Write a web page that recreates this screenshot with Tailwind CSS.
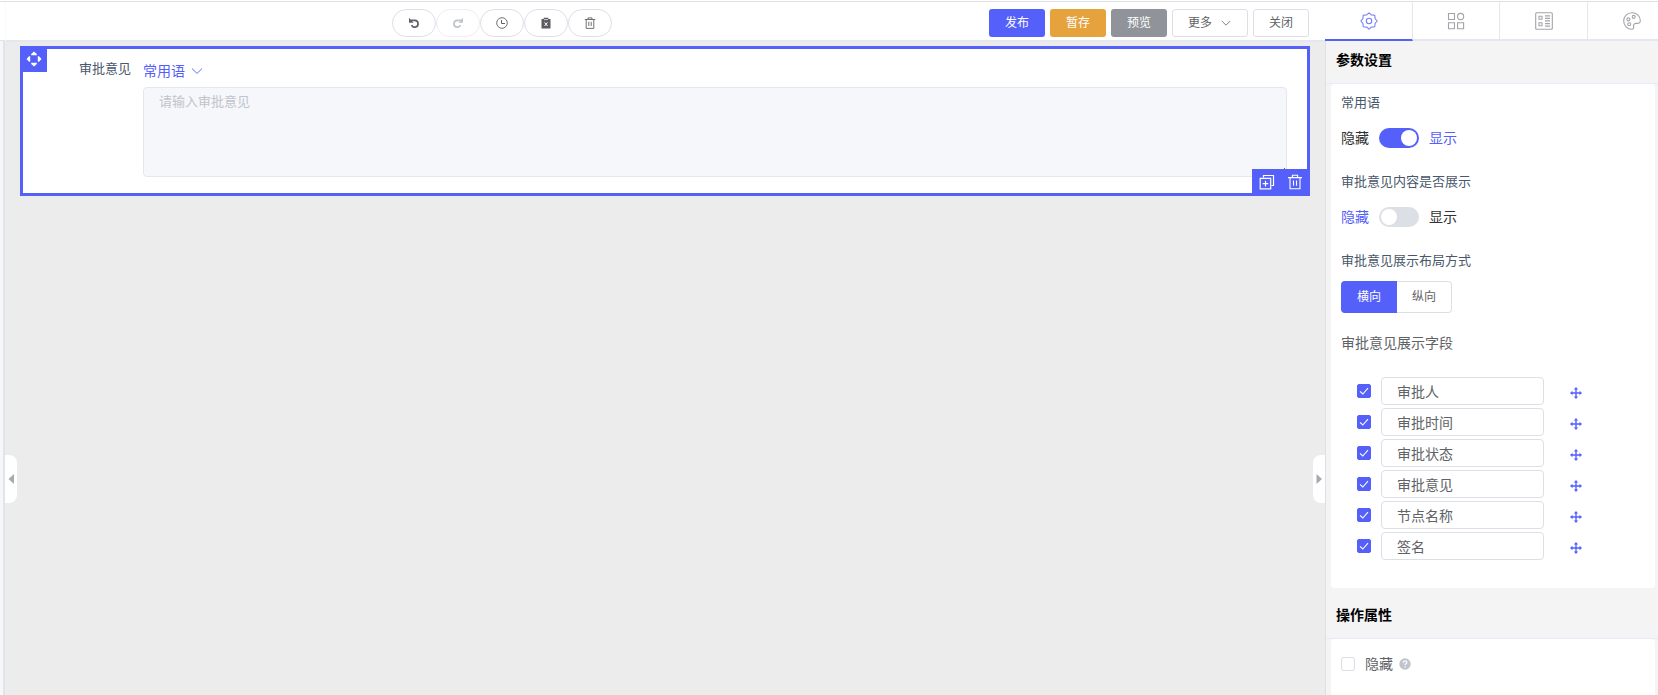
<!DOCTYPE html>
<html lang="zh-CN">
<head>
    <meta charset="UTF-8">
    <meta name="viewport" content="width=device-width, initial-scale=1.0">
    <title>表单设计</title>
    <script src="https://cdn.jsdelivr.net/npm/@tailwindcss/browser@4"></script>
    <style>
        body {
            font-family: "Liberation Sans", "Noto Sans CJK SC", sans-serif;
        }
    </style>
</head>
<body class="h-screen overflow-hidden bg-white text-sm text-[#606266] flex flex-col">
    <div class="mt-px h-px shrink-0 bg-[#dfe0e4]"></div>

    <div class="flex flex-1 min-h-0">
        <!-- collapsed component library -->
        <aside class="w-[5px] shrink-0 flex flex-col">
            <div class="h-[38px] shrink-0"></div>
            <div class="flex-1 border-t border-r-2 border-[#e0e4ee] bg-[#f7f7f8]"></div>
        </aside>

        <main class="relative flex-1 min-w-0 flex flex-col bg-[#ececec]">
            <header class="h-10 shrink-0 flex items-center bg-white border-l border-l-[#fafafa] border-b-2 border-b-[#e4e7ed] pt-1 pl-2 pr-4 text-xs">
                <div class="flex flex-1 justify-center">
                    <button aria-label="撤销" class="w-11 h-7 grid place-items-center rounded-full border border-[#dcdfe6] hover:bg-gray-50">
                        <svg class="w-3 h-3" viewBox="0 0 12 12" fill="none" stroke="#5f6168" stroke-width="1.7"><path d="M2.6 3.4H7a3.4 3.4 0 1 1-3.4 4.8"/><path d="M1 .8v5h4.6z" fill="#5f6168" stroke="none"/></svg>
                    </button>
                    <button aria-label="重做" disabled class="w-11 h-7 grid place-items-center rounded-full border border-[#ebeef5]">
                        <svg class="w-3 h-3" viewBox="0 0 12 12" fill="none" stroke="#c0c4cc" stroke-width="1.7"><path d="M9.4 3.4H5a3.4 3.4 0 1 0 3.4 4.8"/><path d="M11 .8v5H6.4z" fill="#c0c4cc" stroke="none"/></svg>
                    </button>
                    <button aria-label="历史" class="w-11 h-7 grid place-items-center rounded-full border border-[#dcdfe6] hover:bg-gray-50">
                        <svg class="w-3 h-3" viewBox="0 0 12 12" fill="none" stroke="#606266"><circle cx="6" cy="6" r="5.3" stroke-width=".9"/><path d="M5.5 3v3.5H9"/></svg>
                    </button>
                    <button aria-label="清空" class="w-11 h-7 grid place-items-center rounded-full border border-[#dcdfe6] hover:bg-gray-50">
                        <svg class="w-3 h-3" viewBox="0 0 12 12" fill="#5a5c62"><path d="M1.5 2h2.2V.8h4.6V2h2.2v9.6h-9z"/><path d="M4 2.6h4" stroke="#fff" stroke-width=".7"/><path d="M4.5 5.4l3 3.6M7.5 5.4l-3 3.6" stroke="#fff"/></svg>
                    </button>
                    <button aria-label="删除" class="w-11 h-7 grid place-items-center rounded-full border border-[#dcdfe6] hover:bg-gray-50">
                        <svg class="w-3 h-3" viewBox="0 0 12 12" fill="none" stroke="#606266" stroke-width=".9"><path d="M.8 2.5h10.4M4 2.3V.9h4v1.4M2.2 2.5v8.9h7.6V2.5M4.8 4.8v4.2M7.2 4.8v4.2"/></svg>
                    </button>
                </div>
                <div class="flex gap-[5px]">
                    <button class="w-14 h-7 rounded-[3px] bg-[#5460f9] text-white">发布</button>
                    <button class="w-14 h-7 rounded-[3px] bg-[#e6a23c] text-white">暂存</button>
                    <button class="w-14 h-7 rounded-[3px] bg-[#909399] text-white">预览</button>
                    <button class="w-[76px] h-7 rounded-[3px] border border-[#dcdfe6] flex items-center justify-center gap-2">
                        更多
                        <svg class="w-3 h-3" viewBox="0 0 12 12" fill="none" stroke="#606266" stroke-width=".8"><path d="M1.8 4 6 8.2 10.2 4"/></svg>
                    </button>
                    <button class="w-14 h-7 rounded-[3px] border border-[#dcdfe6]">关闭</button>
                </div>
            </header>

            <section class="relative mt-1 mx-[15px] border-3 border-[#5460f9] bg-white pl-14 pr-5 pb-4 flex">
                <label for="opinion" class="h-10 mr-3 flex items-center text-[13px] text-[#48576a]">审批意见</label>
                <div class="flex-1 pt-2">
                    <button class="h-7 flex items-center gap-[5px] text-[#5460f9]">
                        常用语
                        <svg class="w-3.5 h-3.5" viewBox="0 0 14 14" fill="none" stroke="#5460f9" stroke-width=".9"><path d="M2 4.6 7 9.4l5-4.8"/></svg>
                    </button>
                    <textarea id="opinion" placeholder="请输入审批意见" class="block mt-0.5 w-full h-[90px] resize-y rounded border border-[#e4e7ed] bg-[#f5f7fa] px-[15px] py-1 text-[13px] leading-5 placeholder:text-[#c0c4cc]"></textarea>
                </div>

                <button aria-label="移动" class="absolute -top-[3px] -left-[3px] w-[27px] h-[26px] grid place-items-center bg-[#5460f9]">
                    <svg class="w-4 h-4" viewBox="0 0 16 16" fill="#fff"><path d="M8 .5 10.8 3v1.2H5.200V3zM8 15.500 10.800 13v-1.200H5.200V13zM.5 8 3 5.200h1.200v5.600H3zM15.500 8 13 5.200h-1.200v5.600H13z"/></svg>
                </button>
                <div class="absolute -bottom-[3px] -right-[3px] w-[58px] h-[27px] pb-0.5 flex items-center justify-center gap-3 bg-[#5460f9]">
                    <button aria-label="复制">
                        <svg class="block w-4 h-4" viewBox="0 0 16 16" fill="none" stroke="#fff" stroke-width="1.2"><path d="M4.500 3.500v-2h10v10h-2"/><path d="M1.200 4.300h10.500v10.500H1.200zM6.500 6.800v5.600M3.700 9.600h5.600"/></svg>
                    </button>
                    <button aria-label="删除组件">
                        <svg class="block w-4 h-4" viewBox="0 0 16 16" fill="none" stroke="#fff" stroke-width="1.1"><path d="M1 3.600h14M5.400 3.400V1.200h5.200v2.200M3 3.600v11.200h10V3.600M6.500 6.500v5.200M9.500 6.500v5.200"/></svg>
                    </button>
                </div>
            </section>

            <button aria-label="展开左侧" class="absolute left-0 top-[453px] w-3 h-12 grid place-items-center rounded-r-lg bg-white">
                <svg class="w-2 h-3" viewBox="0 0 8 12" fill="#a6a9b0"><path d="M7 1v10L1.500 6z"/></svg>
            </button>
            <button aria-label="收起右侧" class="absolute right-0 top-[453px] w-3 h-12 grid place-items-center rounded-l-lg bg-white">
                <svg class="w-2 h-3" viewBox="0 0 8 12" fill="#a6a9b0"><path d="M1.500 1v10L7 6z"/></svg>
            </button>
        </main>

        <aside class="w-[333px] shrink-0 flex flex-col overflow-hidden bg-[#f4f4f4]">
            <nav class="h-[39px] shrink-0 flex bg-white">
                <button aria-label="组件设置" class="w-[88px] shrink-0 grid place-items-center border-r border-r-[#e4e7ed] border-b-2 border-b-[#5460f9]">
                    <svg class="w-[18px] h-[18px]" viewBox="0 0 18 18" fill="none" stroke="#7580fa" stroke-width="1.1" stroke-linejoin="round"><path d="M9 .8l2.300 2.100 3.500.3.3 3.500L17.200 9l-2.100 2.300-.3 3.500-3.500.3L9 17.200l-2.300-2.100-3.500-.3-.3-3.500L.8 9l2.100-2.300.3-3.500 3.500-.3z"/><circle cx="9" cy="9" r="2.7"/></svg>
                </button>
                <button aria-label="组件" class="w-[87px] shrink-0 grid place-items-center border-r border-b-2 border-[#e4e7ed]">
                    <svg class="w-[18px] h-[18px]" viewBox="0 0 18 18" fill="none" stroke="#a2a4a9" stroke-width="1.1"><path d="M1.500 1.500h6v6h-6zM1.500 10.700h6v6h-6zM10.600 10.700h6v6h-6z"/><circle cx="13.6" cy="4.5" r="3.1"/></svg>
                </button>
                <button aria-label="表单" class="w-[88px] shrink-0 grid place-items-center border-r border-b-2 border-[#e4e7ed]">
                    <svg class="w-[18px] h-[18px]" viewBox="0 0 18 18" fill="none" stroke="#a2a4a9" stroke-width="1.1"><rect x=".7" y=".7" width="16.6" height="16.6" rx="1"/><path d="M4 4.300h3v3H4zM4 10.800h3v3H4zM10 3.900h5M10 6.400h5M10 8.900h5M10 11.600h5M10 14.100h5"/></svg>
                </button>
                <button aria-label="主题" class="w-[88px] shrink-0 grid place-items-center border-b-2 border-[#e4e7ed]">
                    <svg class="w-[18px] h-[18px]" viewBox="0 0 18 18" fill="none" stroke="#a2a4a9" stroke-width="1.1"><path d="M9 .7C4.300.7.7 4.300.7 9s3.500 8.300 8 8.300c1.600 0 2.300-.9 2-2.200-.5-2 .1-3.500 2.200-3.700 1.700-.1 4.400.6 4.400-2.600C17.300 4 13.500.7 9 .7z"/><circle cx="5.4" cy="7.4" r="1.5"/><circle cx="10.7" cy="4.9" r="1.5"/><circle cx="6.2" cy="12.2" r="1.5"/></svg>
                </button>
            </nav>

            <div class="flex-1 min-h-0 overflow-hidden border-l border-[#dcdfe6]">
                <h2 class="h-[43px] pl-2.5 pb-1 flex items-center border-b border-[#e6ebf5] font-bold text-black">参数设置</h2>
                <div class="ml-[5px] mr-[3px] px-2.5 pb-7 rounded bg-white flex flex-col gap-2.5">
                    <div>
                        <div class="h-[39px] flex items-center text-[13px] text-[#48576a]">常用语</div>
                        <label class="h-[30px] flex items-center gap-2.5 text-[#303133]">
                            隐藏
                            <input type="checkbox" role="switch" checked class="appearance-none w-10 h-5 rounded-full bg-[#dcdfe6] checked:bg-[#5460f9] before:block before:w-4 before:h-4 before:m-0.5 before:rounded-full before:bg-white checked:before:ml-[22px]">
                            <span class="text-[#5460f9]">显示</span>
                        </label>
                    </div>
                    <div>
                        <div class="h-[39px] flex items-center text-[13px] text-[#48576a]">审批意见内容是否展示</div>
                        <label class="h-[30px] flex items-center gap-2.5 text-[#303133]">
                            <span class="text-[#5460f9]">隐藏</span>
                            <input type="checkbox" role="switch" class="appearance-none w-10 h-5 rounded-full bg-[#dcdfe6] checked:bg-[#5460f9] before:block before:w-4 before:h-4 before:m-0.5 before:rounded-full before:bg-white checked:before:ml-[22px]">
                            显示
                        </label>
                    </div>
                    <div>
                        <div class="h-[39px] flex items-center text-[13px] text-[#48576a]">审批意见展示布局方式</div>
                        <div class="flex text-xs">
                            <button class="w-14 h-8 rounded-l bg-[#5460f9] text-white">横向</button>
                            <button class="w-[55px] h-8 rounded-r border border-l-0 border-[#dcdfe6]">纵向</button>
                        </div>
                    </div>
                    <div>
                        <div class="h-10 flex items-center">审批意见展示字段</div>
                        <ul id="field-list" class="pt-3.5 pl-4 flex flex-col gap-[3px]"></ul>
                    </div>
                </div>

                <h2 class="mt-2 h-[43px] pl-2.5 pb-1 flex items-center border-b border-[#e6ebf5] font-bold text-black">操作属性</h2>
                <div class="ml-[5px] mr-[3px] px-2.5 pt-2.5 h-32 rounded bg-white">
                    <label class="h-[30px] flex items-center">
                        <input type="checkbox" class="appearance-none w-3.5 h-3.5 mr-2.5 rounded-xs border border-[#dcdfe6] bg-white checked:bg-[#5460f9]">
                        隐藏
                        <svg class="w-3 h-3 ml-1.5" viewBox="0 0 12 12"><circle cx="6" cy="6" r="5.7" fill="#c0c4cc"/><path d="M4.200 4.800c0-2.600 3.700-2.300 3.700-.3 0 1.300-1.800 1.300-1.800 2.600M6.100 8.200v1.300" fill="none" stroke="#fff" stroke-width="1.2"/></svg>
                    </label>
                </div>
            </div>
        </aside>
    </div>

    <script>
        const fields = ['审批人', '审批时间', '审批状态', '审批意见', '节点名称', '签名'];

        document.getElementById('field-list').innerHTML = fields.map((name) => `
            <li class="h-7 flex items-center">
                <span class="grid w-3.5 h-3.5 mr-2.5">
                    <input type="checkbox" checked aria-label="展示${name}" class="peer col-start-1 row-start-1 appearance-none w-3.5 h-3.5 rounded-xs border border-[#dcdfe6] checked:border-[#5460f9] checked:bg-[#5460f9]">
                    <svg class="col-start-1 row-start-1 w-3.5 h-3.5 pointer-events-none hidden peer-checked:block" viewBox="0 0 14 14" fill="none" stroke="#fff" stroke-width="1.1"><path d="M3 7.300 5.800 10 11 4.200"/></svg>
                </span>
                <input type="text" value="${name}" aria-label="${name}" class="w-[163px] h-7 px-[15px] rounded border border-[#dcdfe6] bg-white outline-none focus:border-[#5460f9]">
                <button aria-label="拖动${name}" class="ml-[26px] mt-1">
                    <svg class="block w-3 h-3" viewBox="0 0 12 12" fill="#5460f9"><path d="M6 0l2.200 2.500H6.700v2.800h2.800V3.800L12 6 9.500 8.200V6.700H6.700v2.800h1.500L6 12 3.800 9.500h1.500V6.700H2.500v1.500L0 6l2.500-2.200v1.500h2.800V2.500H3.800z"/></svg>
                </button>
            </li>
        `).join('');
    </script>
</body>
</html>
